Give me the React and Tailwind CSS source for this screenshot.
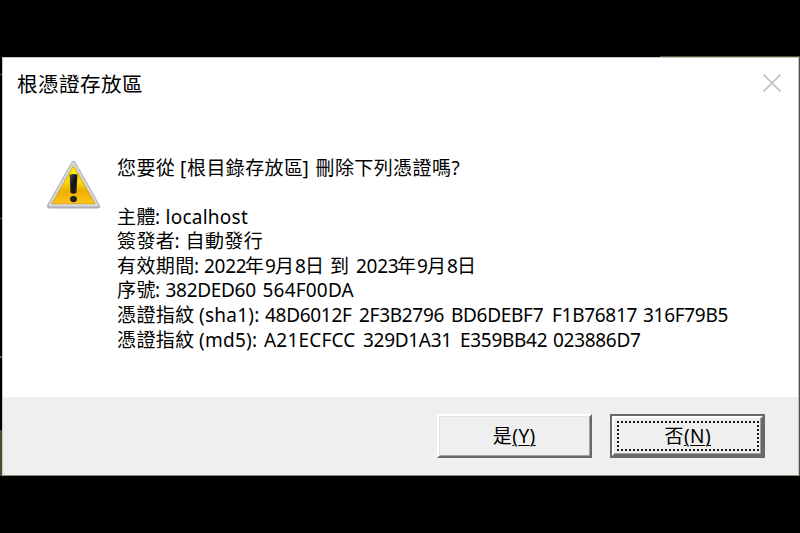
const lines = [
  [['您要從 ', 'c', 63], ['[', 'l', 7], ['根目錄存放區', 'c', 115.5], ['] ', 'l', 13], ['刪除下列憑證嗎', 'c', 136], ['?', 'l', 9]],
  [],
  [['主體', 'c', 38], [': ', 'l', 10.5], ['localhost', 'l', 84]],
  [['簽發者', 'c', 57.5], [': ', 'l', 11], ['自動發行', 'c', 78]],
  [['有效期間', 'c', 77], [': ', 'l', 10], ['2022', 'h', 41], ['年', 'c', 20], ['9', 'h', 10], ['月', 'c', 20], ['8', 'h', 10], ['日 ', 'c', 25], ['到 ', 'c', 26], ['2023', 'h', 41], ['年', 'c', 20], ['9', 'h', 10], ['月', 'c', 20], ['8', 'h', 10], ['日', 'c', 20]],
  [['序號', 'c', 38], [': ', 'l', 10.5], ['382DED60 ', 'h', 97], ['564F00DA', 'w', 92]],
  [['憑證指紋 ', 'c', 82], ['(sha1): ', 'l', 66], ['48D6012F ', 'h', 94], ['2F3B2796 ', 'h', 92], ['BD6DEBF7 ', 'h', 101], ['F1B76817 ', 'h', 91], ['316F79B5', 'h', 88]],
  [['憑證指紋 ', 'c', 82], ['(md5): ', 'l', 65], ['A21ECFCC ', 'w', 99], ['329D1A31 ', 'h', 97], ['E359BB42 ', 'h', 93], ['023886D7', 'h', 90]],
];

// CJK, Latin words and digit groups each advance at their own pace.
const tracking = {
  c: 'tracking-[0.4px]',
  l: 'tracking-[0.25px]',
  h: 'tracking-[-0.3px]',
  w: 'tracking-[0.2px]',
};

function Warning() {
  return (
    <svg className="mt-px ml-px h-[52px] w-[57px]" viewBox="0 0 58 52">
      <defs>
        <linearGradient id="yellow" x1="0" y1="0" x2="0" y2="1">
          <stop offset="0" stopColor="#fff400" />
          <stop offset="0.45" stopColor="#fbd80b" />
          <stop offset="0.65" stopColor="#edae00" />
          <stop offset="1" stopColor="#ffc31c" />
        </linearGradient>
        <linearGradient id="mark" x1="0" y1="0" x2="1" y2="1">
          <stop offset="0" stopColor="#55584f" />
          <stop offset="0.45" stopColor="#101522" />
          <stop offset="1" stopColor="#29251c" />
        </linearGradient>
      </defs>
      <path d="M29 4 L53.5 47.5 H4.5 Z" fill="#aeb0b8" stroke="#aeb0b8" strokeWidth="5" strokeLinejoin="round" />
      <path d="M29 4 L53 46.5 H5 Z" fill="#d6d7dc" stroke="#d6d7dc" strokeWidth="3" strokeLinejoin="round" />
      <path d="M29 6.5 L51 45 H7 Z" fill="url(#yellow)" stroke="#d9a816" strokeWidth="1" strokeLinejoin="round" />
      <path d="M25 15.5 Q29 14 33 15.5 L32 34 Q29 36 26 34 Z" fill="url(#mark)" />
      <ellipse cx="29" cy="40.3" rx="3.5" ry="3.2" fill="#20201f" />
    </svg>
  );
}

function ButtonLabel({ text, letter }) {
  return (
    <span className="mr-px flex items-baseline text-[19px] leading-6 whitespace-pre">
      <span className="w-[20px]">{text}</span>
      <span className="tracking-[0.4px] underline decoration-1 underline-offset-2">({letter})</span>
    </span>
  );
}

export default function App() {
  return (
    <div className="flex h-[533px] w-[800px] flex-col bg-black pt-14 font-['Noto_Sans','Noto_Sans_CJK_TC',sans-serif] text-black">
      <div className="ml-[660px] h-px w-[140px] bg-[#575039]" />
      <div className="flex h-[419px]">
        <div className="flex w-[2px] flex-col">
          <div className="mt-[17px] h-px bg-[#555]" />
          <div className="mt-[143px] h-px bg-[#666000]" />
          <div className="mt-[137px] h-[2px] bg-[#555]" />
          <div className="mt-[72px] flex-1 bg-[#514632]" />
        </div>
        <div className="flex w-[797px] flex-col border border-[#c8c8c8] border-b-[#8c8878] bg-white">
          <div className="flex h-[100px] justify-between pt-[11px] pr-[17px] pl-[14px]">
            <h1 className="text-[20.6px] leading-[31px] font-normal tracking-[0.4px]">根憑證存放區</h1>
            <svg className="mt-[5px] size-[18px]" viewBox="0 0 18 18" fill="none" stroke="#c4c4c4" strokeWidth="1.8">
              <path d="M.5.5l17 17M17.5.5l-17 17" />
            </svg>
          </div>
          <div className="flex flex-1 pl-[41px]">
            <Warning />
            <div className="-mt-[2.5px] ml-[15px]">
              {lines.map((line, i) => (
                <div key={i} className="flex h-[24.6px] items-baseline text-[19px] leading-[24.6px] whitespace-pre">
                  {line.map(([text, kind, width], j) => (
                    <span key={j} className={`shrink-0 ${tracking[kind]}`} style={{ width }}>{text}</span>
                  ))}
                </div>
              ))}
            </div>
          </div>
          <div className="flex h-[78px] gap-[18px] bg-[#efefef] pt-[17px] pl-[434px]">
            <button className="flex h-[44px] w-[155px] border-t-2 border-r-2 border-b-2 border-l-2 border-t-white border-r-[#696969] border-b-[#696969] border-l-white">
              <span className="flex h-full w-full items-center justify-center border border-t-[#e3e3e3] border-r-[#a0a0a0] border-b-[#a0a0a0] border-l-[#e3e3e3]"><ButtonLabel text="是" letter="Y" /></span>
            </button>
            <button className="h-[44px] w-[155px] border-2 border-[#696969]">
              <span className="flex h-full w-full border-2 border-t-white border-r-[#696969] border-b-[#696969] border-l-white">
                <span className="flex h-full w-full border-r border-b border-[#a0a0a0] pt-[3px] pr-px pb-[2px] pl-[3px]">
                  <span className="flex h-full w-full items-center justify-center border-2 border-dotted border-[#1c1c1c]"><ButtonLabel text="否" letter="N" /></span>
                </span>
              </span>
            </button>
          </div>
        </div>
        <div className="w-px bg-[#575039]" />
      </div>
    </div>
  );
}
